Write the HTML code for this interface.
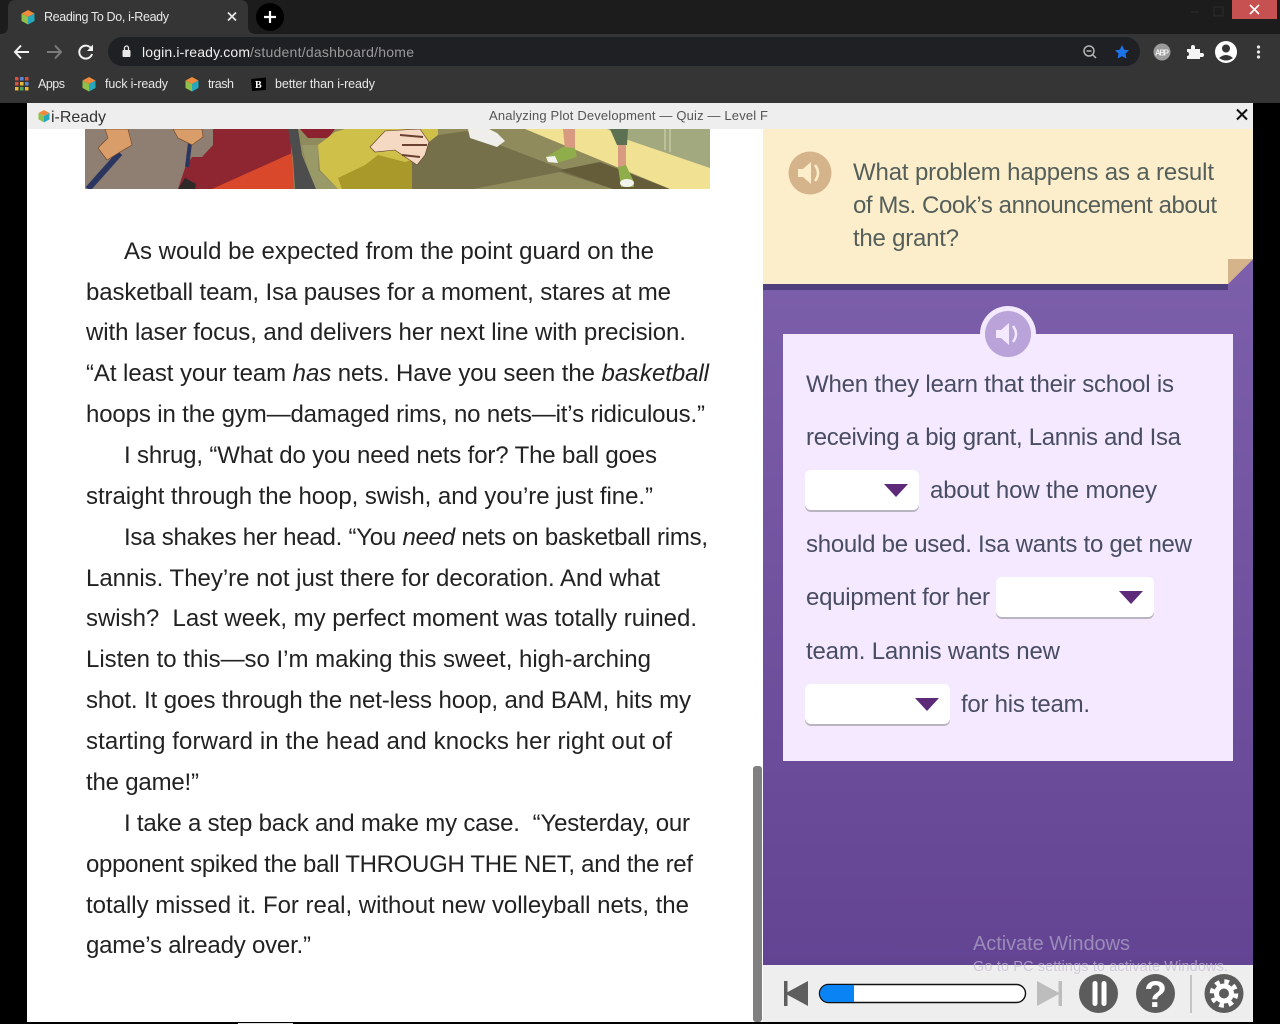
<!DOCTYPE html>
<html><head><meta charset="utf-8"><title>Reading To Do, i-Ready</title>
<style>
html,body{margin:0;padding:0;background:#000;width:1280px;height:1024px;overflow:hidden}
svg{display:block}
text{font-family:"Liberation Sans",sans-serif;white-space:pre}
.l text{font-size:24px;fill:#222}
.q text{font-size:24px;fill:#545f5b}
.a text{font-size:24px;fill:#484d63}
.c{font-size:12.5px;fill:#e8e8e8}
</style></head><body>
<svg width="1280" height="1024" viewBox="0 0 1280 1024" xmlns="http://www.w3.org/2000/svg">
<defs>
<linearGradient id="pg" x1="0" y1="0" x2="0" y2="1"><stop offset="0" stop-color="#8164af"/><stop offset="1" stop-color="#634493"/></linearGradient>
<g id="cube"><polygon points="0,-7 6.5,-3.5 0,0 -6.5,-3.5" fill="#f08a3c"/><polygon points="-6.5,-3.5 0,0 0,7.5 -6.5,4" fill="#8fc04c"/><polygon points="6.5,-3.5 0,0 0,7.5 6.5,4" fill="#27a9bd"/></g>
</defs>

<!-- browser chrome -->
<rect width="1280" height="34" fill="#1c1c1c"/>
<path d="M0,34 Q8,34 8,26 L8,8 Q8,0 16,0 L240,0 Q248,0 248,8 L248,26 Q248,34 256,34 Z" fill="#353535"/>
<use href="#cube" x="28" y="17"/>
<text x="44" y="21" class="c" textLength="125" style="font-size:12.5px">Reading To Do, i-Ready</text>
<path d="M228,12.5 L236,20.5 M236,12.5 L228,20.5" stroke="#e6e6e6" stroke-width="1.8"/>
<circle cx="270" cy="17" r="14" fill="#000"/>
<path d="M270,11 V23 M264,17 H276" stroke="#fff" stroke-width="2.2"/>
<path d="M1191,12 H1199" stroke="#2c2c2c"/>
<rect x="1214" y="7" width="9" height="9" fill="none" stroke="#2c2c2c"/>
<rect x="1232" y="0" width="45" height="19" fill="#c75050"/>
<path d="M1250,5 L1259,14 M1259,5 L1250,14" stroke="#fff" stroke-width="1.6"/>
<rect y="34" width="1280" height="69" fill="#353535"/>
<rect x="108" y="37" width="1032" height="29" rx="14.5" fill="#1f2023"/>
<path d="M29,52 H15 M21,45.5 L15,52 L21,58.5" fill="none" stroke="#f1f1f1" stroke-width="2"/>
<path d="M47,52 H61 M55,45.5 L61,52 L55,58.5" fill="none" stroke="#7c7c7c" stroke-width="2"/>
<path d="M91.5,49 A6.5,6.5 0 1 0 92,54" fill="none" stroke="#f1f1f1" stroke-width="2"/>
<polygon points="93,44.5 93,51 87,51" fill="#f1f1f1"/>
<rect x="122.5" y="50" width="8" height="7" rx="1" fill="#e8e8e8"/>
<path d="M124.5,50 V48 A2,2 0 0 1 128.5,48 V50" fill="none" stroke="#e8e8e8" stroke-width="1.3"/>
<text x="142" y="57" style="font-size:14px" fill="#efefef" textLength="108">login.i-ready.com</text>
<text x="250" y="57" style="font-size:14px" fill="#9a9a9a" textLength="164">/student/dashboard/home</text>
<circle cx="1089" cy="51" r="5" fill="none" stroke="#b5b5b5" stroke-width="1.5"/>
<path d="M1086.5,51 H1091.5 M1093,55 L1096,58" stroke="#b5b5b5" stroke-width="1.5"/>
<polygon points="1122,45 1124.2,49.7 1129,50.3 1125.5,53.6 1126.4,58.5 1122,56.2 1117.6,58.5 1118.5,53.6 1115,50.3 1119.8,49.7" fill="#1a73e8"/>
<circle cx="1162" cy="52" r="8.5" fill="#9b9b9b"/>
<text x="1155" y="55.5" style="font-size:8px;font-weight:bold" fill="#eee" textLength="14">ABP</text>
<path d="M1187,49 H1191 V47 A2,2 0 0 1 1195,47 V49 H1200 V53 H1202 A2,2 0 0 1 1202,57 H1200 V59 H1187 V56 A2,2 0 0 0 1187,52 Z" fill="#f4f4f4"/>
<circle cx="1226" cy="52" r="11" fill="#fff"/>
<circle cx="1226" cy="48.5" r="4" fill="#353535"/>
<path d="M1219,58 Q1226,52 1233,58 Q1226,63 1219,58 Z" fill="#353535"/>
<circle cx="1258.5" cy="47" r="1.6" fill="#e8e8e8"/><circle cx="1258.5" cy="52" r="1.6" fill="#e8e8e8"/><circle cx="1258.5" cy="57" r="1.6" fill="#e8e8e8"/>
<g>
<rect x="15" y="77" width="3.5" height="3.5" fill="#d8503f"/><rect x="20" y="77" width="3.5" height="3.5" fill="#5b86d6"/><rect x="25" y="77" width="3.5" height="3.5" fill="#d8503f"/>
<rect x="15" y="82" width="3.5" height="3.5" fill="#d8503f"/><rect x="20" y="82" width="3.5" height="3.5" fill="#e6b93a"/><rect x="25" y="82" width="3.5" height="3.5" fill="#5b86d6"/>
<rect x="15" y="87" width="3.5" height="3.5" fill="#e6b93a"/><rect x="20" y="87" width="3.5" height="3.5" fill="#4fa35b"/><rect x="25" y="87" width="3.5" height="3.5" fill="#e6b93a"/>
</g>
<text x="38" y="88" class="c" textLength="27">Apps</text>
<use href="#cube" x="89" y="84"/>
<text x="105" y="88" class="c" textLength="63">fuck i-ready</text>
<use href="#cube" x="192" y="84"/>
<text x="208" y="88" class="c" textLength="26">trash</text>
<polygon points="251,79 266,77.5 266,90 252,91" fill="#000"/>
<text x="255" y="88" style="font-size:10px;font-weight:bold;font-family:'Liberation Serif',serif" fill="#fff">B</text>
<text x="275" y="88" class="c" textLength="100">better than i-ready</text>

<!-- page -->
<rect x="0" y="103" width="1280" height="921" fill="#000"/>
<rect x="27" y="103" width="1226" height="26" fill="#eeeeee"/>
<use href="#cube" transform="translate(44,116) scale(.85)"/>
<text x="51" y="122" style="font-size:16px" fill="#333" textLength="55">i-Ready</text>
<text x="489" y="120" style="font-size:13px" fill="#555" textLength="279">Analyzing Plot Development — Quiz — Level F</text>
<path d="M1237,109.5 L1247,119.5 M1247,109.5 L1237,119.5" stroke="#111" stroke-width="2"/>

<rect x="27" y="129" width="736" height="893" fill="#fff"/>
<rect x="753" y="766" width="9" height="256" rx="3" fill="#808080"/>

<!-- illustration -->
<svg x="85" y="129" width="625" height="60" viewBox="85 129 625 60">
<rect x="85" y="129" width="625" height="60" fill="#8f8b5c"/>
<!-- gray figure -->
<polygon points="85,129 213,129 213,145 202,157 192,157 185,168 178,189 85,189" fill="#8f7e72"/>
<!-- red and orange -->
<polygon points="213,129 290,129 293,189 178,189 185,168 192,157 202,157 213,145" fill="#8d2630"/>
<polygon points="212,189 292,153 294,189" fill="#d9482a"/>
<!-- strap -->
<polygon points="302,145 318,145 318,170 338,189 312,189" fill="#9a9a68"/>
<polygon points="288,129 298,129 302,155 316,189 295,189 293,158" fill="#4d4d4d"/>
<polygon points="178,189 185,178 196,184 195,189" fill="#2e2a2a"/>
<polygon points="300,129 335,129 328,138 308,138" fill="#8c2230"/>
<path d="M88,189 L120,153" stroke="#2a3560" stroke-width="6"/>
<path d="M190,143 L187,167" stroke="#2a3560" stroke-width="4"/>
<polygon points="105,129 128,129 132,145 120,152 107,160 98,148 108,138" fill="#d99d6a" stroke="#7a4a2a" stroke-width=".7"/>
<polygon points="173,129 202,129 203,137 192,145 178,138" fill="#d99d6a" stroke="#7a4a2a" stroke-width=".7"/>
<!-- yellow jacket -->
<polygon points="318,145 335,132 345,129 438,129 438,142 412,160 412,189 338,189 320,170" fill="#cfc04a"/>
<polygon points="342,189 338,178 365,165 378,155 405,162 412,160 412,189" fill="#a9982a"/>
<!-- floor -->
<polygon points="412,189 412,155 438,135 466,131 500,145 560,168 613,189" fill="#76704a"/>
<polygon points="438,129 525,129 670,189 613,189 560,168 500,145 466,131 438,135" fill="#8f8b5c"/>
<polygon points="473,189 560,172 613,189" fill="#8f8b5c"/>
<polygon points="560,170 600,162 670,189 613,189" fill="#655c3a"/>
<polygon points="525,129 710,129 710,189 670,189" fill="#f0e292"/>
<polygon points="607,129 710,129 710,168 628,140" fill="#a3a97e"/>
<path d="M665,129 V150 M670,129 V152" stroke="#d4d8b8" stroke-width="1"/>
<!-- hand -->
<polygon points="370,147 385,131 420,129 429,142 425,155 417,165 395,150 375,152" fill="#f6d9c2" stroke="#5a3a2a" stroke-width=".6"/>
<path d="M400,135 L423,137 M402,145 L427,145 M402,155 L420,157" stroke="#6a4030" stroke-width="2"/>
<!-- shoes and legs -->
<path d="M468,129 L470,138 L497,147 L505,141 L497,133 L489,129 Z" fill="#f0eeea"/>
<polygon points="563,129 575,129 575,150 565,150" fill="#d89a80"/>
<polygon points="546,157 563,147 575,148 577,157 557,163 548,162" fill="#8fae4b"/>
<polygon points="546,157 555,156 558,163 548,162" fill="#f2f2ee"/>
<polygon points="610,129 628,129 627,145 617,145" fill="#5c7052"/>
<rect x="618" y="145" width="8" height="22" fill="#d89a80"/>
<polygon points="618,167 626,165 633,180 634,187 621,187" fill="#8fae4b"/>
<ellipse cx="627" cy="183" rx="7" ry="4" fill="#f2f2ee"/>
</svg>

<!-- reading text -->
<g class="l">
<text x="124" y="259" textLength="530">As would be expected from the point guard on the</text>
<text x="86" y="300" textLength="585">basketball team, Isa pauses for a moment, stares at me</text>
<text x="86" y="340" textLength="600">with laser focus, and delivers her next line with precision.</text>
<text x="86" y="381" textLength="623">“At least your team <tspan font-style="italic">has</tspan> nets. Have you seen the <tspan font-style="italic">basketball</tspan></text>
<text x="86" y="422" textLength="619">hoops in the gym—damaged rims, no nets—it’s ridiculous.”</text>
<text x="124" y="463" textLength="533">I shrug, “What do you need nets for? The ball goes</text>
<text x="86" y="504" textLength="567">straight through the hoop, swish, and you’re just fine.”</text>
<text x="124" y="545" textLength="584">Isa shakes her head. “You <tspan font-style="italic">need</tspan> nets on basketball rims,</text>
<text x="86" y="586" textLength="574">Lannis. They’re not just there for decoration. And what</text>
<text x="86" y="626" textLength="611">swish?  Last week, my perfect moment was totally ruined.</text>
<text x="86" y="667" textLength="565">Listen to this—so I’m making this sweet, high-arching</text>
<text x="86" y="708" textLength="605">shot. It goes through the net-less hoop, and BAM, hits my</text>
<text x="86" y="749" textLength="586">starting forward in the head and knocks her right out of</text>
<text x="86" y="790" textLength="113">the game!”</text>
<text x="124" y="831" textLength="566">I take a step back and make my case.  “Yesterday, our</text>
<text x="86" y="872" textLength="607">opponent spiked the ball THROUGH THE NET, and the ref</text>
<text x="86" y="913" textLength="603">totally missed it. For real, without new volleyball nets, the</text>
<text x="86" y="953" textLength="225">game’s already over.”</text>
</g>

<!-- right panel -->
<rect x="763" y="129" width="490" height="836" fill="url(#pg)"/>
<rect x="763" y="284" width="465" height="6" fill="#4f3f7c"/>
<polygon points="763,129 1253,129 1253,259 1228,284 763,284" fill="#fdeecb"/>
<polygon points="1228,259 1253,259 1228,284" fill="#d5b48b"/>
<circle cx="810" cy="173" r="21.5" fill="#d5b48b"/>
<path d="M798,169 H803 L811,162 V184 L803,177 H798 Z" fill="#fdeecb"/>
<path d="M815,165 Q821,173 815,181" fill="none" stroke="#fdeecb" stroke-width="2.5"/>
<g class="q">
<text x="853" y="180" textLength="361">What problem happens as a result</text>
<text x="853" y="213" textLength="364">of Ms. Cook’s announcement about</text>
<text x="853" y="246" textLength="106">the grant?</text>
</g>

<circle cx="1008" cy="334" r="28" fill="#f3e9fd"/>
<rect x="783" y="334" width="450" height="427" fill="#f4e9fe"/>
<circle cx="1008" cy="334" r="23" fill="#b9a3d9"/>
<path d="M996,330 H1001 L1009,323 V345 L1001,338 H996 Z" fill="#f4e9fe"/>
<path d="M1013,326 Q1019,334 1013,342" fill="none" stroke="#f4e9fe" stroke-width="2.5"/>
<g class="a">
<text x="806" y="392" textLength="368">When they learn that their school is</text>
<text x="806" y="445" textLength="375">receiving a big grant, Lannis and Isa</text>
<text x="930" y="498" textLength="227">about how the money</text>
<text x="806" y="552" textLength="386">should be used. Isa wants to get new</text>
<text x="806" y="605" textLength="184">equipment for her</text>
<text x="806" y="659" textLength="254">team. Lannis wants new</text>
<text x="961" y="712" textLength="129">for his team.</text>
</g>
<g>
<rect x="805" y="471" width="114" height="41" rx="6" fill="#b9b4c2"/><rect x="805" y="470" width="114" height="40" rx="6" fill="#fff"/>
<polygon points="884,484 908,484 896,497" fill="#5c2a78"/>
<rect x="996" y="578" width="158" height="41" rx="6" fill="#b9b4c2"/><rect x="996" y="577" width="158" height="40" rx="6" fill="#fff"/>
<polygon points="1119,591 1143,591 1131,604" fill="#5c2a78"/>
<rect x="805" y="685" width="145" height="41" rx="6" fill="#b9b4c2"/><rect x="805" y="684" width="145" height="40" rx="6" fill="#fff"/>
<polygon points="915,698 939,698 927,711" fill="#5c2a78"/>
</g>

<!-- bottom controls -->
<rect x="763" y="965" width="490" height="57" fill="#eeeeee"/>
<rect x="784" y="981" width="3.5" height="25" fill="#5e5e5e"/>
<polygon points="808,981 808,1006 785,993.5" fill="#5e5e5e"/>
<rect x="819.5" y="984.5" width="206" height="18" rx="9" fill="#fff" stroke="#111" stroke-width="1.4"/>
<path d="M854,985 H828.5 A8.5,8.5 0 0 0 828.5,1002 H854 Z" fill="#0a84f5"/>
<polygon points="1037,981 1037,1006 1060,993.5" fill="#bdbdbd"/>
<rect x="1058.5" y="981" width="3.5" height="25" fill="#bdbdbd"/>
<circle cx="1098.5" cy="993.5" r="19.5" fill="#5c5c5c"/>
<rect x="1092.5" y="981" width="5" height="25" rx="2.5" fill="#fff"/><rect x="1101.5" y="981" width="5" height="25" rx="2.5" fill="#fff"/>
<circle cx="1155.5" cy="993.5" r="19.5" fill="#5c5c5c"/>
<text x="1155.5" y="1007" text-anchor="middle" style="font-size:37px;font-weight:bold" fill="#fff">?</text>
<rect x="1190" y="975" width="2" height="38" fill="#c4c4c4"/>
<circle cx="1224" cy="993.5" r="19.5" fill="#5c5c5c"/>
<circle cx="1224" cy="993.5" r="10" fill="#fff"/>
<circle cx="1224" cy="993.5" r="12" fill="none" stroke="#fff" stroke-width="4.5" stroke-dasharray="4.71 4.71"/>
<circle cx="1224" cy="993.5" r="5" fill="#5c5c5c"/>

<!-- watermark -->
<text x="973" y="950" style="font-size:20px" fill="#9a8bb8" textLength="157">Activate Windows</text>
<text x="973" y="971" style="font-size:14.5px" fill="#c4bcd4" fill-opacity=".7" textLength="255">Go to PC settings to activate Windows.</text>

<rect x="238" y="1023" width="55" height="1" fill="#ddd"/>
</svg>
</body></html>
